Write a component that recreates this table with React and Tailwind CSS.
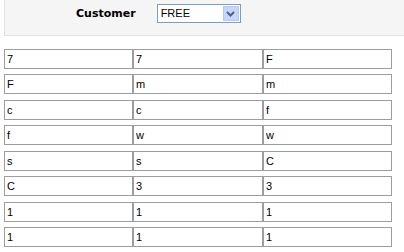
import React from "react";

const rows = [
  ["7", "7", "F"],
  ["F", "m", "m"],
  ["c", "c", "f"],
  ["f", "w", "w"],
  ["s", "s", "C"],
  ["C", "3", "3"],
  ["1", "1", "1"],
  ["1", "1", "1"],
];

const widths = ["w-[129px]", "w-[130px]", "w-[129px]"];
// alternating spacing between rows
const spacing = ["mt-[5px]", "mt-[6px]"];

function Cell({ value, width }) {
  return (
    <input
      readOnly
      value={value}
      className={`${width} h-[20px] border border-[#9a9ea3] bg-white pl-[2px] text-[11px] text-black outline-none`}
      style={{ fontFamily: '"Liberation Sans", Arial, sans-serif' }}
    />
  );
}

function Chevron() {
  return (
    <svg width="9" height="6" viewBox="0 0 9 6">
      <path d="M1 1 L4.5 4.5 L8 1" fill="none" stroke="#4d6185" strokeWidth="2" />
    </svg>
  );
}

export default function App() {
  return (
    <div className="w-[404px] h-[252px] bg-white overflow-hidden">
      <div className="ml-[4px] h-[36px] bg-[#f5f5f5] border-b border-l border-[#e2e2e2] flex items-start pt-[4px]">
        <span
          className="ml-[71px] mt-[4px] text-[11px] font-bold text-black leading-[12px]"
          style={{ fontFamily: '"DejaVu Sans", Verdana, sans-serif' }}
        >
          Customer
        </span>
        <div className="ml-[21px] w-[84px] h-[19px] border border-[#7f9db9] bg-white flex items-center justify-between pl-[3px] pr-[1px]">
          <span
            className="text-[11px] text-black"
            style={{ fontFamily: '"Liberation Sans", Arial, sans-serif' }}
          >
            FREE
          </span>
          <div className="w-[16px] h-[15px] bg-[#c6d6fb] border border-[#b4c8f6] flex items-center justify-center">
            <Chevron />
          </div>
        </div>
      </div>
      <div className="mt-[12px] ml-[4px] flex flex-col">
        {rows.map((r, i) => (
          <div key={i} className={`flex ${i === 0 ? "mt-px" : spacing[(i - 1) % 2]}`}>
            {r.map((v, j) => (
              <Cell key={j} value={v} width={widths[j]} />
            ))}
          </div>
        ))}
      </div>
    </div>
  );
}
